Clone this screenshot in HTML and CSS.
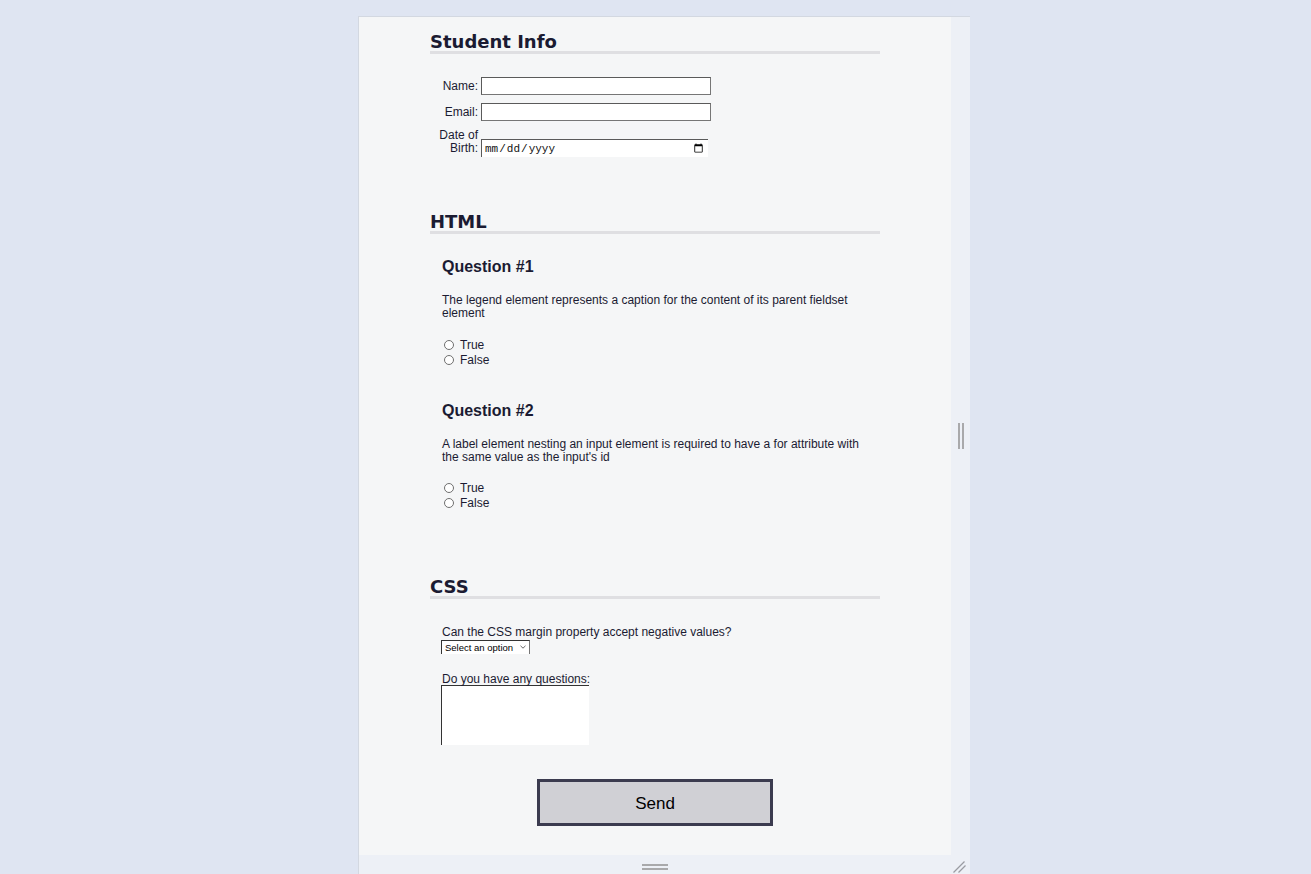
FILE: index.html
```html
<!DOCTYPE html>
<html lang="en">
<head>
<meta charset="utf-8">
<title>Accessibility Quiz</title>
<link rel="stylesheet" href="styles.css">
</head>
<body>
<div class="frame">
  <div class="preview">
    <form class="quiz">
      <section class="block">
        <h2 class="block-title">Student Info</h2>
        <div class="info">
          <div class="info-row">
            <label class="info-label" for="student-name">Name:</label>
            <input class="info-input" id="student-name" type="text">
          </div>
          <div class="info-row">
            <label class="info-label" for="student-email">Email:</label>
            <input class="info-input" id="student-email" type="email">
          </div>
          <div class="info-row info-row-tall">
            <label class="info-label" for="birth-date">Date of Birth:</label>
            <input class="info-input info-date" id="birth-date" type="date">
          </div>
        </div>
      </section>

      <section class="block block-html">
        <h2 class="block-title">HTML</h2>
        <div class="question">
          <h3 class="q-title">Question #1</h3>
          <p class="q-text">The legend element represents a caption for the content of its parent fieldset element</p>
          <div class="options">
            <label class="option"><input class="radio" type="radio" name="q1" value="true"><span>True</span></label>
            <label class="option"><input class="radio" type="radio" name="q1" value="false"><span>False</span></label>
          </div>
        </div>
        <div class="question question-next">
          <h3 class="q-title">Question #2</h3>
          <p class="q-text">A label element nesting an input element is required to have a for attribute with the same value as the input's id</p>
          <div class="options">
            <label class="option"><input class="radio" type="radio" name="q2" value="true"><span>True</span></label>
            <label class="option"><input class="radio" type="radio" name="q2" value="false"><span>False</span></label>
          </div>
        </div>
      </section>

      <section class="block block-css">
        <h2 class="block-title">CSS</h2>
        <div class="css-body">
          <div class="field-caption">Can the CSS margin property accept negative values?</div>
          <div class="select-wrap">
            <select class="select" name="negative">
              <option>Select an option</option>
              <option>Yes</option>
              <option>No</option>
            </select>
            <svg class="select-chevron" width="6" height="4" viewBox="0 0 6 4"><path d="M0.5 0.8 L3 3.2 L5.5 0.8" fill="none" stroke="#555" stroke-width="0.9"/></svg>
          </div>
          <label class="field-caption field-caption-gap" for="questions">Do you have any questions:</label>
          <textarea class="textarea" id="questions" name="questions"></textarea>
        </div>
      </section>

      <button class="send" type="button">Send</button>
    </form>
  </div>
  <div class="strip-right"><span class="bar-v"></span><span class="bar-v"></span></div>
  <div class="strip-bottom"><span class="bar-h"></span><span class="bar-h"></span></div>
  <div class="strip-corner">
    <svg width="19" height="20" viewBox="0 0 19 20"><path d="M2.5 17.5 L13.5 6.5 M7.5 17.5 L14.5 10.5" stroke="#9a9ca2" stroke-width="1.3" fill="none"/></svg>
  </div>
</div>
</body>
</html>
```

FILE: styles.css
```css
html, body {
  margin: 0;
  padding: 0;
}

body {
  background: #dfe5f2;
  height: 874px;
  overflow: hidden;
  font-family: "Liberation Sans", Arial, sans-serif;
  color: #1b1b32;
}

.frame {
  margin: 16px 0 0 358px;
  width: 611px;
  display: grid;
  grid-template-columns: 592px 19px;
  grid-template-rows: 838px 24px;
  border-left: 1px solid #d3d8e1;
  border-top: 1px solid #d3d8e1;
  background: #edf0f6;
}

.preview {
  background: #f5f6f7;
  overflow: hidden;
  padding-top: 16px;
  box-sizing: border-box;
}

.quiz {
  margin: 0;
}

.block {
  width: 450px;
  margin: 0 auto;
}

.block-html {
  margin-top: 56px;
}

.block-css {
  margin-top: 68px;
}

.block-title {
  margin: 0;
  font-family: "DejaVu Sans", Verdana, sans-serif;
  font-weight: bold;
  font-size: 18px;
  line-height: 18px;
  color: #1b1b32;
  border-bottom: 3px solid #dfdfe2;
}

/* Student info */
.info {
  padding-top: 23px;
  padding-left: 3px;
}

.info-row {
  display: flex;
  align-items: flex-end;
  gap: 3px;
  margin-top: 8px;
}

.info-row:first-child {
  margin-top: 0;
}

.info-label {
  width: 45px;
  text-align: right;
  font-size: 12px;
  line-height: 13px;
  padding-bottom: 2px;
}

.info-input {
  width: 230px;
  height: 18px;
  box-sizing: border-box;
  border: 1px solid #767676;
  border-top-color: #5a5a5a;
  border-left-color: #5a5a5a;
  background: #fff;
  padding: 0 2px;
  margin: 0;
  font-family: "Liberation Sans", Arial, sans-serif;
  font-size: 12px;
  outline: none;
}

.info-date {
  width: 227px;
  border-right: none;
  border-bottom: none;
  font-family: "Liberation Mono", "DejaVu Sans Mono", monospace;
  font-size: 11px;
  color: #111;
  padding: 0 2px;
}

/* Questions */
.question {
  padding: 0 12px;
}

.q-title {
  margin: 24px 0 0;
  font-family: "Liberation Sans", Arial, sans-serif;
  font-weight: bold;
  font-size: 16px;
  line-height: 18px;
  color: #1b1b32;
}

.question-next .q-title {
  margin-top: 35px;
}

.q-text {
  margin: 18px 0 0;
  font-size: 12px;
  line-height: 13px;
}

.options {
  margin-top: 17px;
  display: flex;
  flex-direction: column;
}

.question-next .options {
  margin-top: 16px;
}

.option {
  display: flex;
  align-items: center;
  height: 15px;
  font-size: 12px;
}

.radio {
  appearance: none;
  -webkit-appearance: none;
  width: 10px;
  height: 10px;
  margin: 0 6px 0 2px;
  border: 1px solid #6f6f6f;
  border-radius: 50%;
  background: #fff;
  box-sizing: border-box;
}

/* CSS block */
.css-body {
  padding: 0 12px;
}

.field-caption {
  display: block;
  margin-top: 27px;
  font-size: 12px;
  line-height: 13px;
}

.field-caption-gap {
  margin-top: 19px;
}

.select-wrap {
  position: relative;
  width: 89px;
  margin: 1px 0 0 -1px;
}

.select {
  appearance: none;
  -webkit-appearance: none;
  display: block;
  width: 89px;
  height: 14px;
  margin: 0;
  padding: 0 0 0 3px;
  box-sizing: border-box;
  border: 1px solid #767676;
  border-top-color: #333;
  border-left-color: #333;
  border-bottom: none;
  border-radius: 0;
  background: #fff;
  font-family: "Liberation Sans", Arial, sans-serif;
  font-size: 9.5px;
  line-height: 12px;
  color: #000;
  outline: none;
}

.select-chevron {
  position: absolute;
  right: 4px;
  top: 5px;
}

.textarea {
  display: block;
  width: 148px;
  height: 60px;
  margin: -1px 0 0 -1px;
  box-sizing: border-box;
  border: none;
  border-top: 1px solid #333;
  border-left: 1px solid #333;
  background: #fff;
  resize: none;
  outline: none;
}

/* Send */
.send {
  display: block;
  width: 236px;
  height: 47px;
  margin: 34px auto 0;
  box-sizing: border-box;
  border: 3px solid #3b3b4f;
  background: #d0d0d5;
  font-family: "Liberation Sans", Arial, sans-serif;
  font-size: 17px;
  color: #000;
  padding: 2px 0 0;
}

/* Resize strips */
.strip-right {
  display: flex;
  align-items: center;
  justify-content: center;
  gap: 2px;
  padding-left: 1px;
}

.bar-v {
  width: 2px;
  height: 26px;
  background: #a9a9ab;
}

.strip-bottom {
  display: flex;
  flex-direction: column;
  align-items: center;
  gap: 2px;
  padding-top: 9px;
}

.bar-h {
  width: 26px;
  height: 2px;
  background: #a9a9ab;
}

.strip-corner {
  display: block;
}

.strip-corner svg {
  display: block;
}
```
